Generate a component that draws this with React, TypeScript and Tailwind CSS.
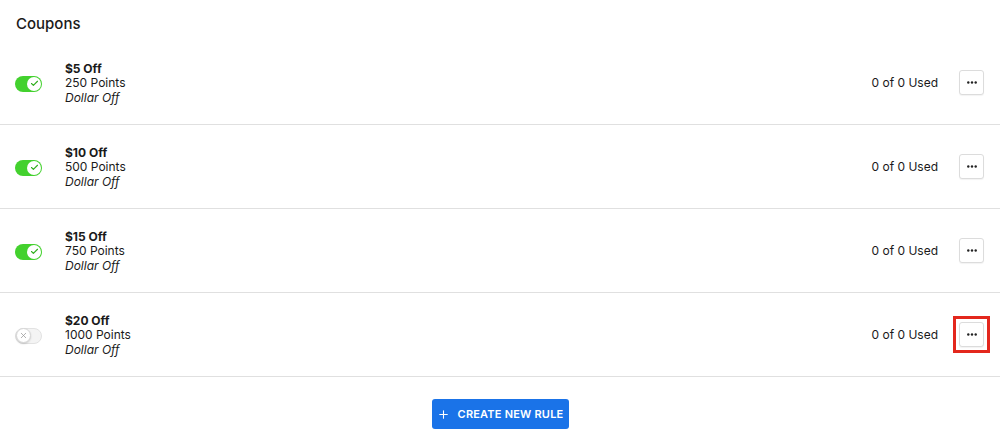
import { Check, Plus, X } from "lucide-react";

type Coupon = {
  id: number;
  title: string;
  points: string;
  kind: string;
  enabled: boolean;
  used: string;
  highlighted?: boolean;
};

const coupons: Coupon[] = [
  { id: 1, title: "$5 Off", points: "250 Points", kind: "Dollar Off", enabled: true, used: "0 of 0 Used" },
  { id: 2, title: "$10 Off", points: "500 Points", kind: "Dollar Off", enabled: true, used: "0 of 0 Used" },
  { id: 3, title: "$15 Off", points: "750 Points", kind: "Dollar Off", enabled: true, used: "0 of 0 Used" },
  {
    id: 4,
    title: "$20 Off",
    points: "1000 Points",
    kind: "Dollar Off",
    enabled: false,
    used: "0 of 0 Used",
    highlighted: true,
  },
];

function Toggle({ on }: { on: boolean }) {
  if (on) {
    return (
      <div className="flex h-[16px] w-[27px] items-center justify-end rounded-full bg-[#43d12e] pr-[1px]">
        <div className="flex h-[14px] w-[14px] items-center justify-center rounded-full bg-white">
          <Check className="h-[9px] w-[9px] text-[#2fae1c]" strokeWidth={3} />
        </div>
      </div>
    );
  }
  return (
    <div className="flex h-[16px] w-[27px] items-center rounded-full border border-[#e2e2e2] bg-[#f4f4f4]">
      <div className="flex h-[15px] w-[15px] items-center justify-center rounded-full border border-[#d6d6d6] bg-white shadow-[0_1px_2px_rgba(0,0,0,0.15)]">
        <X className="h-[9px] w-[9px] text-[#9a9a9a]" strokeWidth={2} />
      </div>
    </div>
  );
}

function MoreButton({ highlighted }: { highlighted?: boolean }) {
  const button = (
    <button
      type="button"
      className="flex h-[25px] w-[25px] items-center justify-center rounded-[3px] border border-[#dcdcdc] bg-white shadow-[0_1px_1px_rgba(0,0,0,0.05)]"
    >
      <svg width="10" height="3" viewBox="0 0 10 3" className="fill-[#222]">
        <circle cx="1.3" cy="1.5" r="1.2" />
        <circle cx="5" cy="1.5" r="1.2" />
        <circle cx="8.7" cy="1.5" r="1.2" />
      </svg>
    </button>
  );
  if (!highlighted) return button;
  return <div className="-m-[6px] border-[3px] border-[#e3271d] p-[3px]">{button}</div>;
}

export default function App() {
  return (
    <div className="min-h-[443px] bg-white font-['Inter',sans-serif] text-[#1a1a1a]">
      <h1 className="px-[16px] pt-[14px] pb-[7px] text-[15px] font-medium leading-[20px]">Coupons</h1>
      <div>
        {coupons.map((c) => (
          <div
            key={c.id}
            className="flex h-[84px] items-center border-b border-[#e0e0e0] pr-[16px] pl-[15px]"
          >
            <div className="mt-[2px] w-[50px]">
              <Toggle on={c.enabled} />
            </div>
            <div className="mt-[2px] flex-1 text-[12px] leading-[14.5px]">
              <div className="font-bold">{c.title}</div>
              <div>{c.points}</div>
              <div className="italic">{c.kind}</div>
            </div>
            <div className="mr-[21px] text-[12px]">{c.used}</div>
            <MoreButton highlighted={c.highlighted} />
          </div>
        ))}
      </div>
      <div className="flex justify-center pt-[22px]">
        <button
          type="button"
          className="flex h-[30px] w-[137px] items-center justify-center gap-[8px] rounded-[3px] bg-[#1a73e8] text-[11px] font-semibold tracking-[0.2px] text-white"
        >
          <Plus className="h-[13px] w-[13px]" strokeWidth={2} />
          CREATE NEW RULE
        </button>
      </div>
    </div>
  );
}
